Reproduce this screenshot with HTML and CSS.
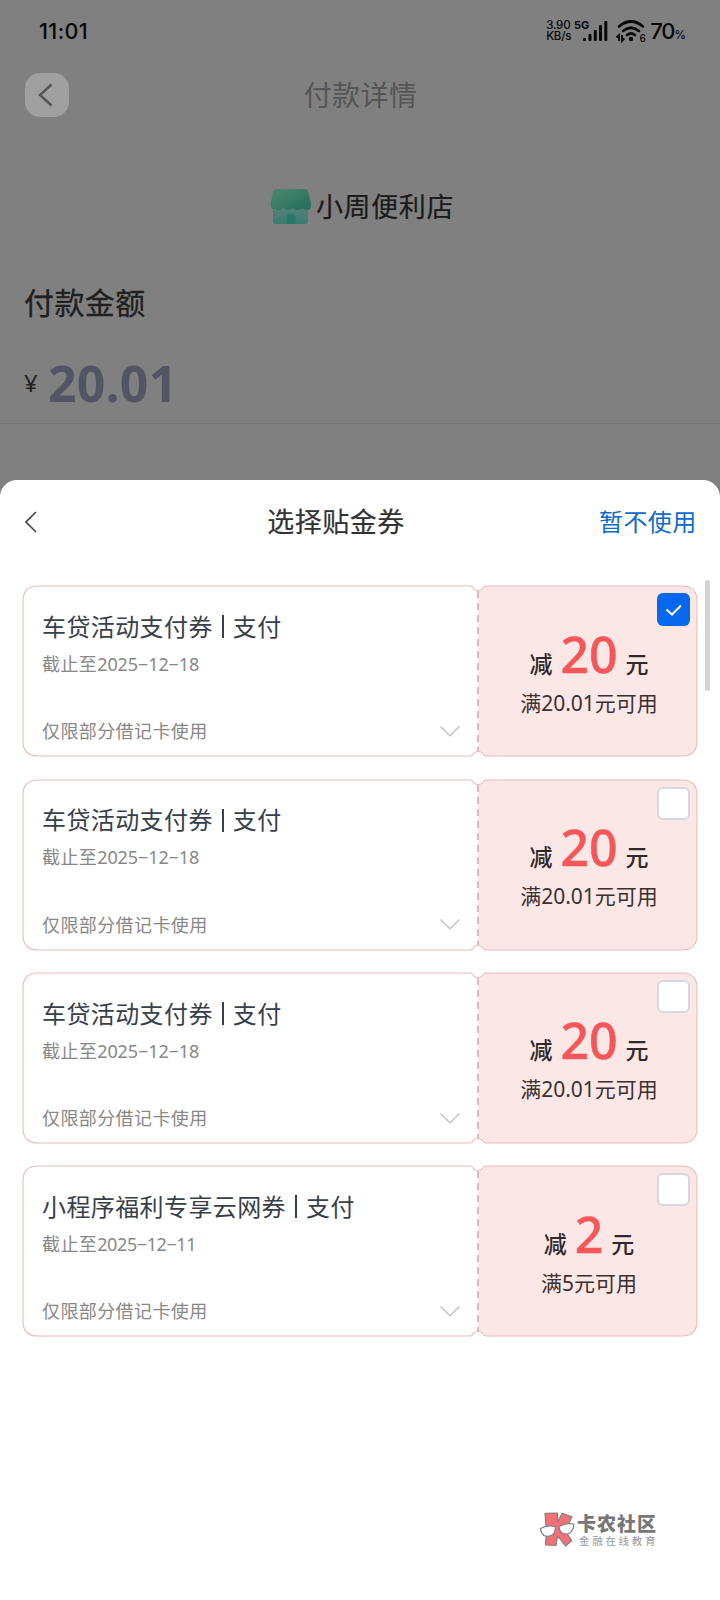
FILE: index.html
```html
<!DOCTYPE html>
<html lang="zh-CN">
<head>
<meta charset="utf-8">
<title>付款详情</title>
<link rel="stylesheet" href="styles.css">
</head>
<body>
<svg width="0" height="0" class="defs" aria-hidden="true">
  <symbol id="ticket" viewBox="0 0 676 172">
    <path d="M456 1H661q14 1 14 15V156q0 14-14 15H456z" fill="#fbe7e6"/>
    <path d="M449 0h14q0 5.500-7 5.500t-7-5.500zM449 172h14q0-5.500-7-5.500t-7 5.500z" fill="#fff"/>
    <path d="M16 1H448q2 0 3 2 1.500 2.500 5 2.500t5-2.500q1-2 3-2H660Q675 1 675 16V156Q675 171 660 171H464q-2 0-3-2-1.500-2.500-5-2.500t-5 2.500q-1 2-3 2H16Q1 171 1 156V16Q1 1 16 1z" fill="none" stroke="#e9bdb9" stroke-width="1.100"/>
    <path d="M456 6V166" stroke="#dba4a3" stroke-width="1.500" stroke-dasharray="7 5"/>
  </symbol>
  <symbol id="down" viewBox="0 0 22 13"><path d="M1.500 1.500L11 10.700 20.500 1.500" fill="none" stroke="#c4c4c6" stroke-width="1.500"/></symbol>
</svg>
<div class="screen">
  <header class="status">
    <span class="time">11:01</span>
    <div class="indicators">
      <div class="speed"><span>3.90</span><span>KB/s</span></div>
      <svg class="signal" width="34" height="24" viewBox="0 0 34 24">
        <text x="0" y="10" class="net">5G</text>
        <g fill="#080808"><rect x="9" y="19" width="3" height="3" rx="1"/><rect x="14.500" y="15" width="3" height="7" rx="1"/><rect x="19.800" y="11" width="3" height="11" rx="1"/><rect x="25" y="6" width="3" height="16" rx="1"/><rect x="30.300" y="2" width="3" height="20" rx="1"/></g>
      </svg>
      <svg class="wifi" width="32" height="24" viewBox="0 0 32 24">
        <g fill="none" stroke="#080808" stroke-width="2.700" stroke-linecap="round"><path d="M4 7.500Q16-2.500 28 7.500M8 12Q16 5.500 24 12M12 16Q16 13 20 16"/></g>
        <circle cx="16" cy="20" r="2.300" fill="#080808"/>
        <path d="M4 22V16L1.500 18.500M7 16V22L9.500 19.500" fill="none" stroke="#080808" stroke-width="1.900"/>
        <text x="24.500" y="22.500" class="band">6</text>
      </svg>
      <span class="battery">70<small>%</small></span>
    </div>
  </header>
  <nav class="nav">
    <span class="back"><svg width="44" height="44" viewBox="0 0 44 44"><path d="M26.500 11.500L15 22 26.500 32.500" fill="none" stroke="#555" stroke-width="2.400"/></svg></span>
    <h1>付款详情</h1>
  </nav>
  <div class="shop">
    <svg width="42" height="36" viewBox="0 0 42 36">
      <defs><linearGradient id="roof" x1="0" y1="0" x2="1" y2="1"><stop offset="0" stop-color="#4c8a70"/><stop offset="1" stop-color="#246b5a"/></linearGradient>
      <linearGradient id="wall" x1="0" y1="0" x2="0" y2="1"><stop offset="0" stop-color="#5c8580"/><stop offset="1" stop-color="#397c71"/></linearGradient></defs>
      <path d="M3 14H38V32q0 3-3 3H6q-3 0-3-3z" fill="url(#wall)"/>
      <path d="M6 0H35q2.500 0 3.200 2.500L41 15q.5 6-4 6-3 0-4.500-2-2 2-5 2t-4.500-2q-2 2-4.500 2t-5-2q-2 2-5 2t-4-1q-4 1-4-5L3 2.500Q3.700 0 6 0z" fill="url(#roof)"/>
      <path d="M16.500 35V29q0-4 4.500-4t4.500 4v6z" fill="#2a7767"/>
    </svg>
    <span>小周便利店</span>
  </div>
  <section class="amount">
    <h2>付款金额</h2>
    <p><span class="yen">¥</span><span class="sum">20.01</span></p>
  </section>
  <main class="sheet">
    <div class="sheet-head">
      <svg width="14" height="24" viewBox="0 0 14 24"><path d="M11 2L1 12 11 22" fill="none" stroke="#444" stroke-width="1.600"/></svg>
      <h3>选择贴金券</h3>
      <a class="skip">暂不使用</a>
    </div>
    <div class="list">
      <article class="card">
        <svg class="frame"><use href="#ticket"/></svg>
        <div class="info"><h4>车贷活动支付券<i></i>支付</h4><p class="date">截止至<em>2025−12−18</em></p><div class="limit"><span>仅限部分借记卡使用</span><svg width="22" height="13"><use href="#down"/></svg></div></div>
        <div class="value"><p class="cut"><span>减</span><b>20</b><span>元</span></p><p class="min">满<em>20.01</em>元可用</p></div>
        <span class="box checked"><svg width="32" height="32" viewBox="0 0 32 32"><path d="M9.500 16.500L15 21.500 24 12.500" fill="none" stroke="#fff" stroke-width="2"/></svg></span>
      </article>
      <article class="card">
        <svg class="frame"><use href="#ticket"/></svg>
        <div class="info"><h4>车贷活动支付券<i></i>支付</h4><p class="date">截止至<em>2025−12−18</em></p><div class="limit"><span>仅限部分借记卡使用</span><svg width="22" height="13"><use href="#down"/></svg></div></div>
        <div class="value"><p class="cut"><span>减</span><b>20</b><span>元</span></p><p class="min">满<em>20.01</em>元可用</p></div>
        <span class="box"></span>
      </article>
      <article class="card">
        <svg class="frame"><use href="#ticket"/></svg>
        <div class="info"><h4>车贷活动支付券<i></i>支付</h4><p class="date">截止至<em>2025−12−18</em></p><div class="limit"><span>仅限部分借记卡使用</span><svg width="22" height="13"><use href="#down"/></svg></div></div>
        <div class="value"><p class="cut"><span>减</span><b>20</b><span>元</span></p><p class="min">满<em>20.01</em>元可用</p></div>
        <span class="box"></span>
      </article>
      <article class="card">
        <svg class="frame"><use href="#ticket"/></svg>
        <div class="info"><h4>小程序福利专享云网券<i></i>支付</h4><p class="date">截止至<em class="tight">2025−12−11</em></p><div class="limit"><span>仅限部分借记卡使用</span><svg width="22" height="13"><use href="#down"/></svg></div></div>
        <div class="value"><p class="cut"><span>减</span><b>2</b><span>元</span></p><p class="min">满<em>5</em>元可用</p></div>
        <span class="box"></span>
      </article>
      <span class="scrollbar"></span>
    </div>
    <footer class="brand">
      <svg width="36" height="38" viewBox="0 0 36 38">
        <path d="M6 2.300L18.500 2V11L23.300 2.300 33 5.700 27.500 17 28 22.500 32.700 29.700 26.500 35 18.500 25 17 34.500 6.500 34 7.500 20z" fill="#f17177" stroke="#858080" stroke-width="1.200" stroke-linejoin="round"/>
        <g fill="#fff" stroke="#858080" stroke-width="1.200"><path d="M1.500 17.500Q8 13.500 16 15.500 17 20 14 23.500 10 26.500 5 24.500 1.500 21.500 1.500 17.500zM20 15.500Q27 11.500 34.800 13 35 18 31.500 21.500 27.500 24.500 23 22 20 19.500 20 15.500z"/></g>
      </svg>
      <div><strong>卡农社区</strong><small>金融在线教育</small></div>
    </footer>
  </main>
</div>
</body>
</html>
```
FILE: styles.css
```css
* { box-sizing: border-box; }
body, h1, h2, h3, h4, p { margin: 0; font-weight: 400; }
body { font-family: "Noto Sans", "Noto Sans CJK SC", sans-serif; background: #808080; }
em, i { font-style: normal; }
svg { display: block; flex: none; }
.defs { position: absolute; }
.screen { width: 720px; height: 1600px; display: flex; flex-direction: column; overflow: hidden; background: #808080; }
.status { height: 62px; padding: 0 34px 0 39px; display: flex; justify-content: space-between; align-items: center; color: #080808; }
.time { font: 500 21.500px Inter, sans-serif; letter-spacing: .4px; }
.indicators { display: flex; align-items: center; }
.speed { display: flex; flex-direction: column; width: 27px; font: 500 11.500px/11px Inter, sans-serif; letter-spacing: -.2px; white-space: nowrap; }
.signal { margin-left: 1px; overflow: visible; }
.net { font: 700 11px Inter, sans-serif; fill: #080808; }
.wifi { margin-left: 7px; overflow: visible; }
.band { font: 500 10px Inter, sans-serif; fill: #080808; }
.battery { margin-left: 3px; font: 500 22px Inter, sans-serif; letter-spacing: -1px; white-space: nowrap; }
.battery small { font-size: 11.500px; letter-spacing: 0; }
.nav { height: 66px; display: grid; grid-template-columns: 44px 1fr 44px; align-items: center; padding: 0 24px 0 25px; }
.back { width: 44px; height: 44px; border-radius: 15px; background: #a0a0a0; }
.nav h1 { text-align: center; font-size: 28px; line-height: 40px; letter-spacing: .4px; color: #555; }
.shop { height: 40px; margin-top: 59px; padding-left: 270px; display: flex; align-items: center; font-size: 27px; line-height: 40px; letter-spacing: .6px; color: #1b1b1b; }
.shop span { margin-left: 4px; -webkit-text-stroke: .2px #1b1b1b; }
.amount { height: 197px; margin-bottom: 56px; padding: 54px 24px 0; border-bottom: 1px solid #747474; }
.amount h2 { font-size: 30px; line-height: 44px; letter-spacing: .4px; color: #202020; -webkit-text-stroke: .3px #202020; }
.amount p { display: flex; align-items: center; line-height: 60px; margin-top: 28px; }
.yen { width: 24px; font-size: 24px; color: #222; }
.sum { font: 700 50px/60px "Noto Sans", sans-serif; letter-spacing: .2px; color: #535565; }
.sheet { height: 1120px; background: #fff; border-radius: 17px 17px 0 0; }
.sheet-head { height: 84px; padding: 0 24px 0 25px; display: grid; grid-template-columns: 48px 1fr 97px; align-items: center; }
.sheet-head h3 { text-align: center; font-size: 27px; line-height: 40px; letter-spacing: .5px; color: #333; -webkit-text-stroke: .2px #333; }
.skip { font-size: 24px; line-height: 40px; letter-spacing: .4px; color: #0c6bcb; white-space: nowrap; }
.list { position: relative; margin-top: 21.300px; padding: 0 22px; display: flex; flex-direction: column; gap: 21.300px; }
.card { position: relative; display: grid; grid-template-columns: 456px 220px; width: 676px; height: 172px; }
.frame { position: absolute; inset: 0; width: 676px; height: 172px; }
.info { position: relative; padding: 23.700px 17px 0 20px; }
.info h4 { display: flex; align-items: center; height: 36px; font-size: 24px; line-height: 36px; letter-spacing: .4px; color: #37404a; }
.info i { width: 2px; height: 23px; margin: 0 9px 0 9px; background: #37404a; }
.date { font-size: 18px; line-height: 26px; height: 26px; margin-top: 6px; letter-spacing: .4px; color: #888; }
.date em { letter-spacing: -.1px; }
.date .tight { letter-spacing: -.4px; }
.limit { display: flex; justify-content: space-between; align-items: center; height: 26px; margin-top: 41.500px; font-size: 18px; line-height: 26px; letter-spacing: .4px; color: #888; }
.value { position: relative; display: flex; flex-direction: column; align-items: center; padding: 39.500px 0 0 2px; }
.cut { display: flex; align-items: baseline; height: 62px; line-height: 58px; font-size: 23px; font-weight: 500; color: #302929; }
.cut b { margin: 0 8px; font: 500 50px/58px "Noto Sans", sans-serif; color: #f4575a; -webkit-text-stroke: .5px #f4575a; }
.min { height: 32px; font-size: 21px; line-height: 32px; color: #3a3030; white-space: nowrap; }
.box { position: absolute; top: 8px; right: 8px; width: 33px; height: 33px; border: 2px solid #d5d8e0; border-radius: 6px; background: #fff; }
.checked { border: 0; background: #0768ee; }
.scrollbar { position: absolute; top: -5px; right: 10px; width: 5px; height: 111px; border-radius: 3px; background: #d3d3d3; }
.brand { display: flex; align-items: center; margin: 173px 0 0 539px; height: 40px; gap: 2px; }
.brand div { display: flex; flex-direction: column; font-family: "Noto Sans CJK SC", sans-serif; }
.brand strong { font-size: 19px; font-weight: 900; line-height: 19px; letter-spacing: 1px; color: #777; }
.brand small { font-size: 10.500px; line-height: 13px; margin: 2px 0 0 2px; letter-spacing: 2.700px; color: #999; }
```
